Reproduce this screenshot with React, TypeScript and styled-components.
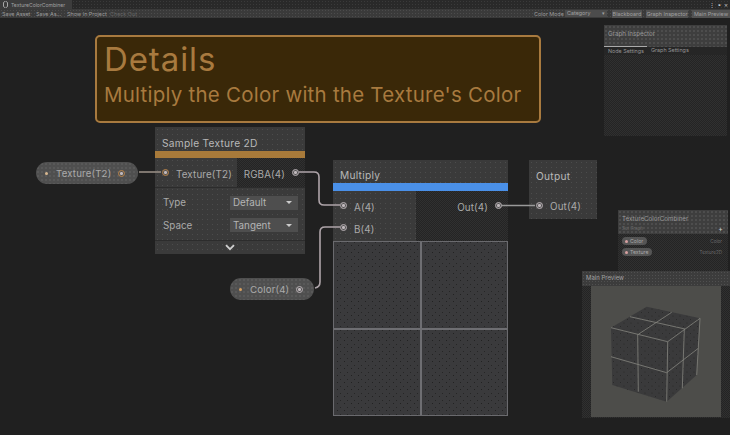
import * as React from "react";
import styled, { createGlobalStyle } from "styled-components";

const Global = createGlobalStyle`
  html, body { margin: 0; padding: 0; background: #202020; overflow: hidden; }
  body { font-family: Inter, "Liberation Sans", sans-serif; }
`;

const dots = (c: string, size = 5) => `
  background-image: radial-gradient(${c} 0.6px, transparent 0.9px);
  background-size: ${size}px ${size}px;
`;
const dither = `
  background: repeating-conic-gradient(#303030 0 25%, #242424 0 50%) 0 0 / 2px 2px;
`;

const Page = styled.div`
  width: 730px;
  height: 435px;
  display: flex;
  flex-direction: column;
  overflow: hidden;
`;
const TabBar = styled.div`
  height: 9px;
  display: flex;
  justify-content: space-between;
  background-color: #292929;
  ${dots("#3a3a3a", 3)}
`;
const Tab = styled.div`
  width: 72px;
  display: flex;
  align-items: center;
  gap: 3px;
  background: #3c3c3c;
  color: #a0a0a0;
  font-size: 5.05px;
  padding-left: 3px;
  box-sizing: border-box;
  white-space: nowrap;
`;
const WinIcons = styled.div`
  display: flex;
  gap: 3px;
  padding-right: 2px;
  color: #c4c4c4;
  font-size: 6px;
  line-height: 9px;
`;
const Toolbar = styled.div`
  height: 9px;
  display: flex;
  align-items: center;
  background-color: #3a3a3a;
  ${dots("#4c4c4c", 3)}
  color: #a0a0a0;
  font-size: 5.4px;
  padding-left: 2px;
`;
const ToolText = styled.span<{ $w: number; $dim?: boolean }>`
  width: ${(p) => p.$w}px;
  color: ${(p) => (p.$dim ? "#666" : "#9c9c9c")};
  white-space: nowrap;
`;
const Spacer = styled.div`
  flex: 1;
`;
const ModeSelect = styled.div`
  width: 42px;
  height: 7px;
  margin: 0 1px 0 4px;
  padding: 0 2px;
  box-sizing: border-box;
  display: flex;
  justify-content: space-between;
  line-height: 7px;
  background: #4c4c4c;
`;
const ToolButton = styled.div<{ $w: number }>`
  width: ${(p) => p.$w}px;
  height: 8px;
  margin-left: 4px;
  line-height: 8px;
  text-align: center;
  background: #525252;
  color: #a0a0a0;
  white-space: nowrap;
`;
const Canvas = styled.div`
  flex: 1;
  position: relative;
  background: #202020;
`;
const Place = styled.div<{ $x: number; $y: number; $w: number; $h: number }>`
  position: absolute;
  left: ${(p) => p.$x}px;
  top: ${(p) => p.$y - 18}px;
  width: ${(p) => p.$w}px;
  height: ${(p) => p.$h}px;
  box-sizing: border-box;
`;
const Sticky = styled(Place)`
  border: 2px solid #a87a3f;
  border-radius: 5px;
  background: #3a2808;
  color: #a87a3f;
  padding: 0 7px;
  display: flex;
  flex-direction: column;
`;
const StickyTitle = styled.div`
  font-size: 33px;
  line-height: 43px;
  margin-top: 1px;
  letter-spacing: 0.9px;
`;
const StickyBody = styled.div`
  font-size: 20.5px;
  line-height: 28px;
  white-space: nowrap;
  letter-spacing: 0.23px;
`;
const Node = styled(Place)`
  display: flex;
  flex-direction: column;
  background-color: #3a3a3a;
  color: #b4b4b4;
  ${dots("#4c4c4c")}
`;
const NodeHeader = styled.div<{ $h: number; $pad: number }>`
  height: ${(p) => p.$h}px;
  flex: none;
  box-sizing: border-box;
  display: flex;
  align-items: center;
  padding: ${(p) => p.$pad}px 7px 0;
  font-size: 10.2px;
  letter-spacing: 0.25px;
  color: #b8b8b8;
`;
const Bar = styled.div<{ $c: string; $h: number }>`
  height: ${(p) => p.$h}px;
  flex: none;
  background: ${(p) => p.$c};
`;
const Ports = styled.div<{ $h: number; $left: number }>`
  height: ${(p) => p.$h}px;
  flex: none;
  display: grid;
  grid-template-columns: ${(p) => p.$left}px 1fr;
`;
const InCol = styled.div`
  display: flex;
  flex-direction: column;
  background-color: #3a3a3a;
  ${dots("#4c4c4c")}
`;
const OutCol = styled.div`
  display: flex;
  flex-direction: column;
  ${dither}
`;
const PortRow = styled.div<{ $h: number; $right?: boolean }>`
  height: ${(p) => p.$h}px;
  display: flex;
  align-items: center;
  justify-content: ${(p) => (p.$right ? "flex-end" : "flex-start")};
  gap: 7px;
  font-size: 9.8px;
  letter-spacing: 0.15px;
  padding: 0 ${(p) => (p.$right ? 6 : 7)}px;
  color: #aaa;
  white-space: nowrap;
`;
const PortLabel = styled.span`
  margin-top: 3px;
`;
const Port = styled.span<{ $c?: string }>`
  width: 7px;
  height: 7px;
  flex: none;
  box-sizing: border-box;
  border: 1.5px solid ${(p) => p.$c ?? "#b8b0b4"};
  border-radius: 50%;
  background: radial-gradient(#c0b8bc 1.2px, #555 1.8px);
`;
const Controls = styled.div`
  flex: 1;
  display: flex;
  flex-direction: column;
  justify-content: center;
  gap: 8.6px;
  padding: 0 8px;
  border-top: 1px solid #2c2c2c;
`;
const ControlRow = styled.div`
  display: flex;
  justify-content: space-between;
  align-items: center;
  height: 14px;
  font-size: 9.8px;
  color: #aaa;
`;
const Dropdown = styled.div`
  width: 68px;
  height: 14px;
  margin-right: -1px;
  box-sizing: border-box;
  padding: 0 6px 0 3px;
  display: flex;
  justify-content: space-between;
  align-items: center;
  background: #4e4e4e;
  color: #b4b4b4;
`;
const Caret = styled.span`
  width: 0;
  height: 0;
  border-left: 3px solid transparent;
  border-right: 3px solid transparent;
  border-top: 3.5px solid #ccc;
`;
const NodeFooter = styled.div`
  height: 14px;
  flex: none;
  display: flex;
  align-items: center;
  justify-content: center;
  border-top: 1px solid #2c2c2c;
  box-sizing: border-box;
`;
const Preview = styled.div`
  flex: 1;
  display: grid;
  grid-template-columns: 1fr 1fr;
  grid-template-rows: 1fr 1fr;
  border: 1px solid #6a6a6e;
  box-sizing: border-box;
  background: #6e6e72;
  gap: 2px;
`;
const PreviewCell = styled.div`
  background-color: #3a3a3c;
  background-image:
    radial-gradient(#222 0.6px, transparent 0.9px),
    radial-gradient(#262626 0.5px, transparent 0.8px);
  background-size: 7px 7px, 7px 7px;
  background-position: 0 0, 3px 4px;
`;
const Pill = styled(Place)`
  display: flex;
  align-items: center;
  padding: 0 14px 0 9px;
  gap: 7px;
  border-radius: 11px;
  background-color: #4f4f4f;
  ${dots("#5f5f5f", 4)}
  color: #aaa;
  font-size: 9.6px;
  letter-spacing: 0.2px;
  white-space: nowrap;
`;
const PillDot = styled.span<{ $c: string }>`
  width: 3px;
  height: 3px;
  flex: none;
  border-radius: 50%;
  background: ${(p) => p.$c};
`;
const PillLabel = styled.span`
  flex: 1;
  margin-left: 1px;
  margin-top: 1px;
`;
const Wires = styled.svg`
  position: absolute;
  left: 0;
  top: -18px;
  width: 730px;
  height: 435px;
  pointer-events: none;
`;
const Panel = styled(Place)`
  display: flex;
  flex-direction: column;
  ${dither}
`;
const PanelHead = styled.div<{ $h: number }>`
  height: ${(p) => p.$h}px;
  flex: none;
  box-sizing: border-box;
  background-color: #3e3e3e;
  ${dots("#565656", 4)}
  color: #999;
  font-size: 6.2px;
  padding: 5px 4px 0;
`;
const InspectorTabs = styled.div`
  height: 8px;
  display: flex;
  flex: none;
  background: #262626;
  color: #949494;
  font-size: 5.4px;
  line-height: 9px;
`;
const InspectorTab = styled.div<{ $w: number; $on?: boolean }>`
  width: ${(p) => p.$w}px;
  padding-left: 4px;
  box-sizing: border-box;
  border-top: ${(p) => (p.$on ? "1px solid #aaa" : "none")};
  margin-top: -1px;
`;
const Sub = styled.div`
  display: flex;
  justify-content: space-between;
  color: #6a6a6a;
  font-size: 4.5px;
  margin-top: 4px;
  padding-right: 1px;
`;
const Plus = styled.span`
  color: #ccc;
  font-size: 7px;
  line-height: 5px;
`;
const BoardBody = styled.div`
  flex: 1;
  display: flex;
  flex-direction: column;
  gap: 3px;
  padding: 3px 6px 0 4px;
`;
const BoardRow = styled.div`
  display: flex;
  justify-content: space-between;
  align-items: center;
  color: #6a6a6a;
  font-size: 4.6px;
`;
const BoardPill = styled.div`
  height: 8px;
  padding: 0 4px 0 3px;
  display: flex;
  align-items: center;
  gap: 2px;
  border-radius: 4px;
  background: #555;
  color: #aaa;
  font-size: 5.2px;
`;
const PreviewHead = styled.div`
  height: 15px;
  flex: none;
  box-sizing: border-box;
  padding: 3px 4px;
  background-color: #3c3c3c;
  ${dots("#505050", 3)}
  color: #a0a0a0;
  font-size: 6px;
`;
const PreviewBody = styled.div`
  flex: 1;
  display: flex;
  padding: 0 9px 1px;
  ${dither}
`;
const Viewport = styled.div`
  flex: 1;
  background: #4d4d4a;
`;
const CubeSvg = styled.svg`
  display: block;
  width: 130px;
  height: 130px;
`;

function UnityIcon() {
  return (
    <svg width="5" height="7" viewBox="0 0 5 7">
      <path d="M2.5 0 L4.5 1.5 V5.5 L2.5 7 L0.5 5.5 V1.5 Z" fill="none" stroke="#b4b4b4" strokeWidth="0.9" />
    </svg>
  );
}

function Cube() {
  // drawn in page coordinates, viewport starts at (591, 286)
  return (
    <CubeSvg viewBox="591 286 130 130">
      <defs>
        <pattern id="cubeDots" width="7" height="7" patternUnits="userSpaceOnUse">
          <circle cx="1" cy="1" r="0.6" fill="#222" />
          <circle cx="4.5" cy="4.5" r="0.55" fill="#262626" />
        </pattern>
      </defs>
      <polygon points="646.7,306.7 700,318.3 696.7,375 666.7,401.7 612.3,385 611,327.7" fill="#3a3a3b" />
      <polygon points="646.7,306.7 700,318.3 696.7,375 666.7,401.7 612.3,385 611,327.7" fill="url(#cubeDots)" />
      <g fill="none" stroke="#85857f" strokeWidth="0.8">
        <polyline points="611,327.7 667.7,341.7 700,318.3 696.7,375" />
        <polyline points="667.7,341.7 666.7,401.7" />
        <polyline points="630,316.7 685,329" />
        <polyline points="671.7,312.3 638.3,334.3" />
        <polyline points="637.7,334.3 638.3,391.7" />
        <polyline points="684.3,329.3 682.3,388.3" />
        <polyline points="611,356.7 666.7,372.7 698.3,348.3" />
      </g>
    </CubeSvg>
  );
}

function Chevron() {
  return (
    <svg width="10" height="7" viewBox="0 0 10 7">
      <path d="M1 1.2 L5 5.2 L9 1.2" fill="none" stroke="#d0d0d0" strokeWidth="1.8" />
    </svg>
  );
}

export default function App() {
  return (
    <Page>
      <Global />
      <TabBar>
        <Tab>
          <UnityIcon />
          TextureColorCombiner
        </Tab>
        <WinIcons>
          <span>⋮</span>
          <span>▪</span>
          <span>×</span>
        </WinIcons>
      </TabBar>
      <Toolbar>
        <ToolText $w={34}>Save Asset</ToolText>
        <ToolText $w={31}>Save As...</ToolText>
        <ToolText $w={43}>Show In Project</ToolText>
        <ToolText $w={30} $dim>Check Out</ToolText>
        <Spacer />
        <ToolText $w={27}>Color Mode</ToolText>
        <ModeSelect>
          <span>Category</span>
          <span>▾</span>
        </ModeSelect>
        <ToolButton $w={30}>Blackboard</ToolButton>
        <ToolButton $w={42}>Graph Inspector</ToolButton>
        <ToolButton $w={38}>Main Preview</ToolButton>
      </Toolbar>
      <Canvas>
        <Sticky $x={95} $y={35} $w={446} $h={88}>
          <StickyTitle>Details</StickyTitle>
          <StickyBody>Multiply the Color with the Texture's Color</StickyBody>
        </Sticky>

        <Pill $x={36} $y={162} $w={102} $h={22}>
          <PillDot $c="#d8b890" />
          <PillLabel>Texture(T2)</PillLabel>
          <Port $c="#b8834a" />
        </Pill>

        <Node $x={155} $y={127} $w={150} $h={127}>
          <NodeHeader $h={24} $pad={7}>Sample Texture 2D</NodeHeader>
          <Bar $c="#a87a3a" $h={7} />
          <Ports $h={29} $left={82}>
            <InCol>
              <PortRow $h={29}>
                <Port $c="#b8834a" />
                <PortLabel>Texture(T2)</PortLabel>
              </PortRow>
            </InCol>
            <OutCol>
              <PortRow $h={29} $right>
                <PortLabel>RGBA(4)</PortLabel>
                <Port />
              </PortRow>
            </OutCol>
          </Ports>
          <Controls>
            <ControlRow>
              Type
              <Dropdown>Default<Caret /></Dropdown>
            </ControlRow>
            <ControlRow>
              Space
              <Dropdown>Tangent<Caret /></Dropdown>
            </ControlRow>
          </Controls>
          <NodeFooter><Chevron /></NodeFooter>
        </Node>

        <Node $x={333} $y={160} $w={175} $h={256}>
          <NodeHeader $h={23} $pad={6}>Multiply</NodeHeader>
          <Bar $c="#4a90e8" $h={8} />
          <Ports $h={50} $left={83}>
            <InCol>
              <PortRow $h={29}><Port /><PortLabel>A(4)</PortLabel></PortRow>
              <PortRow $h={15}><Port /><PortLabel>B(4)</PortLabel></PortRow>
            </InCol>
            <OutCol>
              <PortRow $h={29} $right><PortLabel>Out(4)</PortLabel><Port /></PortRow>
            </OutCol>
          </Ports>
          <Preview>
            <PreviewCell />
            <PreviewCell />
            <PreviewCell />
            <PreviewCell />
          </Preview>
        </Node>

        <Node $x={529} $y={160} $w={68} $h={59}>
          <NodeHeader $h={31} $pad={0}>Output</NodeHeader>
          <Ports $h={28} $left={68}>
            <InCol>
              <PortRow $h={28}><Port /><PortLabel>Out(4)</PortLabel></PortRow>
            </InCol>
          </Ports>
        </Node>

        <Pill $x={230} $y={278} $w={84} $h={22}>
          <PillDot $c="#d8a060" />
          <PillLabel>Color(4)</PillLabel>
          <Port />
        </Pill>

        <Wires viewBox="0 0 730 435">
          <g fill="none" stroke="#aea4a9" strokeWidth="1.6">
            <path d="M139 172 H161" stroke="#968c84" />
            <path d="M299 172 H314 Q319 172 319 177 V200 Q319 205 324 205 H340" />
            <path d="M315 288 Q320 287 320 282 V232 Q320 227 325 227 H340" />
            <path d="M501 205.5 H535" stroke="#999" />
          </g>
        </Wires>

        <Panel $x={604} $y={25} $w={123} $h={111}>
          <PanelHead $h={22}>Graph Inspector</PanelHead>
          <InspectorTabs>
            <InspectorTab $w={43} $on>Node Settings</InspectorTab>
            <InspectorTab $w={60}>Graph Settings</InspectorTab>
          </InspectorTabs>
        </Panel>

        <Panel $x={618} $y={210} $w={110} $h={61}>
          <PanelHead $h={24}>
            TextureColorCombiner
            <Sub>
              <span>Set Graph</span>
              <Plus>+</Plus>
            </Sub>
          </PanelHead>
          <BoardBody>
            <BoardRow>
              <BoardPill><PillDot $c="#d8a0a0" />Color</BoardPill>
              Color
            </BoardRow>
            <BoardRow>
              <BoardPill><PillDot $c="#d8a0a0" />Texture</BoardPill>
              Texture2D
            </BoardRow>
          </BoardBody>
        </Panel>

        <Panel $x={582} $y={271} $w={148} $h={147}>
          <PreviewHead>Main Preview</PreviewHead>
          <PreviewBody>
            <Viewport><Cube /></Viewport>
          </PreviewBody>
        </Panel>
      </Canvas>
    </Page>
  );
}
